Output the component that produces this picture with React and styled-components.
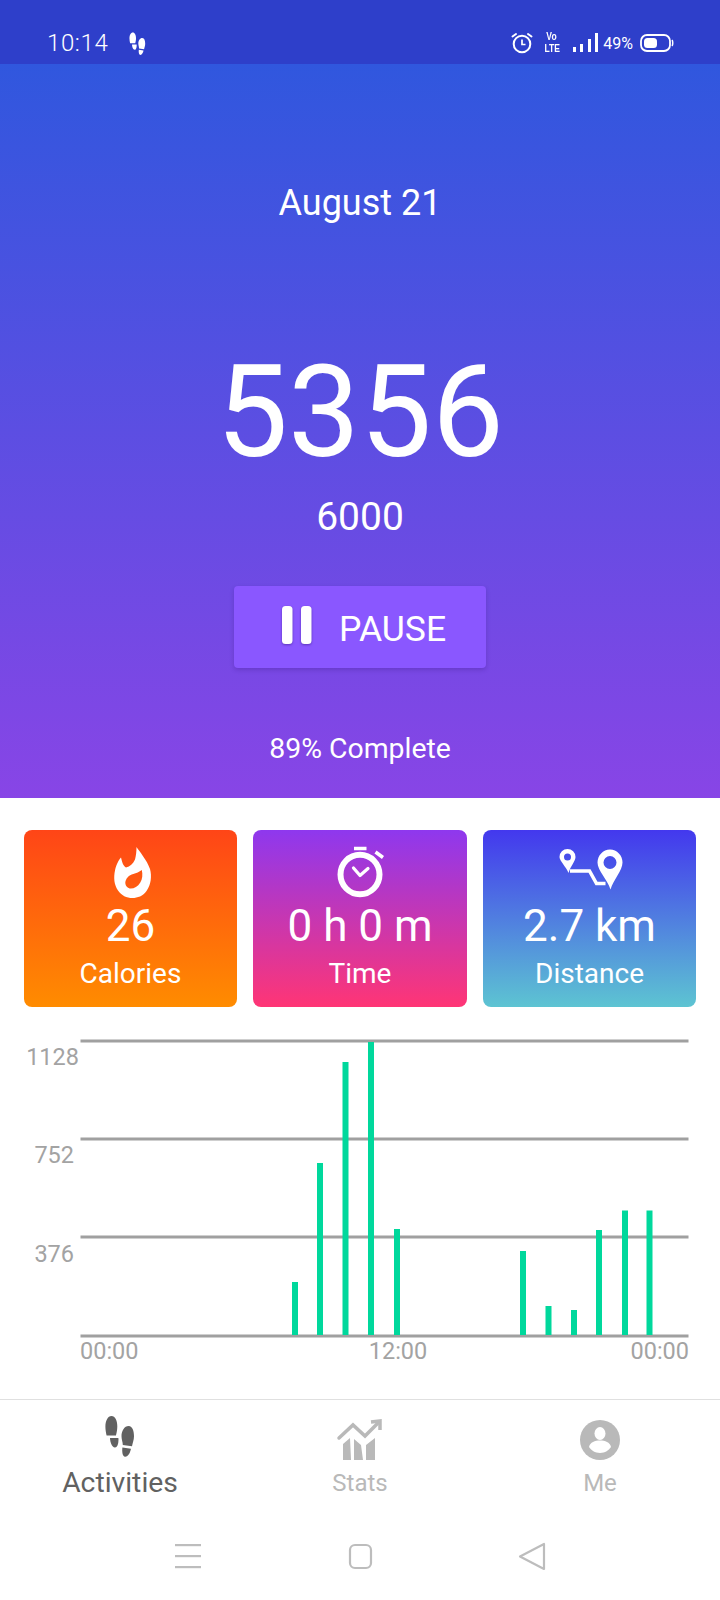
import React from "react";
import styled, { createGlobalStyle } from "styled-components";

const Global = createGlobalStyle`
  html, body { margin: 0; padding: 0; background: #fff; }
  body { font-family: Roboto, "Liberation Sans", sans-serif; overflow: hidden; }
`;

const Page = styled.div`
  width: 720px;
  height: 1600px;
  display: flex;
  flex-direction: column;
  background: #fff;
  overflow: hidden;
`;

const StatusBar = styled.div`
  height: 64px;
  flex: none;
  background: #2e3fca;
  color: #fff;
  display: flex;
  align-items: center;
  padding: 22px 46px 0 47px;
  box-sizing: border-box;
`;
const Clock = styled.span`
  font-size: 24px;
  font-weight: 300;
  letter-spacing: 0.6px;
  margin-right: 13px;
`;
const StatusRight = styled.div`
  margin-left: auto;
  display: flex;
  align-items: center;
  gap: 4px;
`;
const AlarmIcon = styled.svg`
  margin-right: -2px;
`;
const Volte = styled.span`
  font-family: "Liberation Sans", sans-serif;
  font-weight: 700;
  font-size: 10.4px;
  line-height: 12px;
  width: 17px;
  text-align: center;
  white-space: nowrap;
  transform: scaleX(0.82);
  margin: 0 9px 0 7px;
`;
const Percent = styled.span`
  font-size: 16px;
  margin: 0 3px 0 0;
`;

const Hero = styled.section`
  height: 734px;
  flex: none;
  box-sizing: border-box;
  padding-top: 117px;
  background: linear-gradient(180deg, #3057de 0%, #8845e6 100%);
  color: #fff;
  display: flex;
  flex-direction: column;
  align-items: center;
`;
const DateText = styled.div`
  font-size: 36px;
  line-height: 44px;
`;
const Count = styled.div`
  font-size: 128px;
  line-height: 130px;
  margin-top: 122px;
`;
const Goal = styled.div`
  font-size: 39px;
  line-height: 44px;
  margin-top: 18px;
`;
const PauseButton = styled.button`
  width: 252px;
  height: 82px;
  margin-top: 47px;
  border: 0;
  border-radius: 4px;
  background: #8a57ff;
  color: #fff;
  font-family: inherit;
  font-size: 35.5px;
  box-shadow: 0 2px 4px rgba(50, 20, 120, 0.25);
  display: flex;
  align-items: center;
  justify-content: center;
  gap: 25px;
  padding: 0 0 0 6px;
`;
const PauseIcon = styled.svg`
  filter: drop-shadow(0 1.5px 1px rgba(60, 30, 140, 0.6));
`;
const PauseText = styled.span`
  padding-top: 3px;
`;
const Complete = styled.div`
  font-size: 28.4px;
  line-height: 34px;
  margin-top: 64px;
`;

const Cards = styled.div`
  display: grid;
  grid-template-columns: 213px 214px 213px;
  gap: 16px;
  padding: 32px 24px 0;
`;
const Card = styled.div`
  height: 177px;
  box-sizing: border-box;
  padding-top: 6px;
  border-radius: 8px;
  background: linear-gradient(180deg, ${(p) => p.$from}, ${(p) => p.$to});
  color: #fff;
  display: flex;
  flex-direction: column;
  align-items: center;
`;
const CardValue = styled.div`
  font-size: 44px;
  line-height: 40px;
`;
const CardLabel = styled.div`
  font-size: 28px;
  line-height: 32px;
  margin-top: 12px;
`;

const ChartSvg = styled.svg`
  display: block;
  flex: none;
  margin-top: 13px;
`;
const AxisText = styled.text`
  font-family: Roboto, sans-serif;
  font-size: 23.5px;
  fill: #a3a3a3;
`;

const BottomNav = styled.nav`
  flex: none;
  margin-top: 17px;
  border-top: 1px solid #e0e0e0;
  display: grid;
  grid-template-columns: 240px 240px 240px;
  height: 118px;
  box-sizing: border-box;
`;
const NavItem = styled.div`
  display: flex;
  flex-direction: column;
  align-items: center;
  color: ${(p) => (p.$active ? "#616161" : "#b9b9b9")};
`;
const NavIcon = styled.svg`
  flex: none;
  margin: ${(p) => p.$top}px 0 ${(p) => -p.$top}px;
`;
const NavLabel = styled.div`
  font-size: ${(p) => (p.$active ? 28.3 : 24)}px;
  line-height: 32px;
  margin-top: 7px;
`;
const SystemNav = styled.div`
  flex: none;
  display: grid;
  grid-template-columns: repeat(3, 172px);
  justify-items: center;
  align-items: center;
  padding: 24px 102px 0;
`;

const feetPaths = (
  <>
    <path d="M21.5 10c3.6 0 5.8 4.6 5.8 10.4 0 3.6-.8 6.5-1.4 9.2l-9.3-.1c-.6-2.8-1.2-5.6-1.2-8.8C15.4 14.8 17.8 10 21.5 10z" />
    <path d="M20 32l8.4-.1c.4 3.2-.4 9.600-3.5 9.600-3 0-4.800-5.300-4.900-9.500z" />
    <path d="M38.7 20c3.8 0 5.3 5.3 5.3 10.3 0 3.7-1.5 7-2 10l-9.2-1.3c0-3-1.3-5.6-1.3-8.8 0-5.200 2.800-10.200 7.200-10.200z" />
    <path d="M32.4 41.5l8.5 1.3c-.4 3.200-2.600 8-5.800 8-2.800 0-3.200-5.600-2.700-9.300z" />
  </>
);

const bars = [
  [295, 1282], [320, 1163], [345.5, 1062], [371, 1042], [397, 1229],
  [523, 1251], [548.5, 1306], [574, 1310], [599, 1230], [625, 1210.5], [649.5, 1210.5],
];
const TOP = 1020;

export default function App() {
  return (
    <Page>
      <Global />
      <StatusBar>
        <Clock>10:14</Clock>
        <svg width="33" height="33" viewBox="0 0 60 60" fill="#fff">{feetPaths}</svg>
        <StatusRight>
          <AlarmIcon width="24" height="24" viewBox="0 0 24 24" fill="none" stroke="#fff" strokeWidth="2">
            <circle cx="12" cy="13" r="8.3" />
            <path d="M12 8.5V13.5H15.5" strokeWidth="1.7" />
            <path d="M2.5 5.5L6 3M21.5 5.5L18 3" strokeLinecap="round" />
          </AlarmIcon>
          <Volte>Vo<br />LTE</Volte>
          <svg width="26" height="22" viewBox="0 0 26 22" fill="#fff">
            <rect x="0" y="15" width="3" height="5" />
            <rect x="7" y="12" width="3" height="8" />
            <rect x="15" y="7" width="3" height="13" />
            <rect x="22" y="1" width="3" height="19" />
          </svg>
          <Percent>49%</Percent>
          <svg width="34" height="20" viewBox="0 0 34 20">
            <rect x="1" y="2" width="29" height="16" rx="6" fill="none" stroke="#fff" strokeWidth="1.8" />
            <rect x="4" y="5" width="13" height="10" rx="3.5" fill="#fff" />
            <path d="M32 7c1 1 1 5 0 6" fill="none" stroke="#fff" strokeWidth="1.5" />
          </svg>
        </StatusRight>
      </StatusBar>

      <Hero>
        <DateText>August 21</DateText>
        <Count>5356</Count>
        <Goal>6000</Goal>
        <PauseButton>
          <PauseIcon width="34" height="44" viewBox="0 0 34 44">
            <rect x="2" y="1" width="10.5" height="38" rx="3.5" fill="#fff" />
            <rect x="21" y="1" width="10.5" height="38" rx="3.5" fill="#fff" />
          </PauseIcon>
          <PauseText>PAUSE</PauseText>
        </PauseButton>
        <Complete>89% Complete</Complete>
      </Hero>

      <Cards>
        <Card $from="#ff4517" $to="#ff8c00">
          <svg width="70" height="70" viewBox="0 0 70 70">
            <path
              fillRule="evenodd"
              fill="#fff"
              d="M40.5 11C43 15 51 24 54 33c2 7 1 16-3.5 22-3.5 5-9 7-14 7-6 0-11-2.5-14.5-7.5-4-6-4.5-13-3-20 .7-4 3-10 6-13 1 4 2 8.5 5 10 4-1 7-3.5 9-8 1-4 1.5-8 1.5-12.5z M29.3 46.500c.5-4 3.500-7.500 8-8.500 3-.7 6-2 8.500-4 1 4.500.7 9-1.500 12.500-2.500 4-6 6-9.500 6-3 0-5.500-2.500-5.500-6z"
            />
          </svg>
          <CardValue>26</CardValue>
          <CardLabel>Calories</CardLabel>
        </Card>
        <Card $from="#8e38ee" $to="#ff3575">
          <svg width="70" height="70" viewBox="0 0 70 70" fill="none" stroke="#fff">
            <ellipse cx="35" cy="38.5" rx="19.5" ry="19.8" strokeWidth="6" />
            <path d="M29 12.5H41.5" strokeWidth="3.5" />
            <path d="M50.5 16L58 21.5" strokeWidth="3.5" />
            <path d="M28.5 32L35 39.5L43 32.5" strokeWidth="3.2" strokeLinecap="round" strokeLinejoin="round" />
          </svg>
          <CardValue>0 h 0 m</CardValue>
          <CardLabel>Time</CardLabel>
        </Card>
        <Card $from="#4338ee" $to="#5dc4d2">
          <svg width="70" height="70" viewBox="0 0 70 65">
            <g transform="translate(0 1)">
              <path
                fillRule="evenodd"
                fill="#fff"
                d="M12.5 9.500a8 8 0 0 1 8 8c0 4-5 9-7 16-2.500-6.500-9-12-9-16a8 8 0 0 1 8-8z M12.500 14a3.500 3.500 0 1 0 0 7 3.500 3.500 0 0 0 0-7z"
              />
              <path
                fillRule="evenodd"
                fill="#fff"
                d="M55 10c7 0 12.5 6 12.5 13 0 8-9 17-12 27-3-10-13-19-13-27 0-7 5.500-13 12.500-13z M55 16.500a6.500 6.500 0 1 0 0 13 6.500 6.500 0 0 0 0-13z"
              />
              <path d="M15 31.5H34.5L41.5 44H50.5" fill="none" stroke="#fff" strokeWidth="3.5" />
            </g>
          </svg>
          <CardValue>2.7 km</CardValue>
          <CardLabel>Distance</CardLabel>
        </Card>
      </Cards>

      <ChartSvg width="720" height="362" viewBox={`0 ${TOP} 720 362`}>
        {[1041, 1139, 1237, 1336].map((y) => (
          <rect key={y} x="80.5" y={y - 1.5} width="608" height="3" fill="#a0a0a0" />
        ))}
        {bars.map(([x, y]) => (
          <rect key={x} x={x - 3} y={y} width="6" height={1335 - y} fill="#00d89c" />
        ))}
        <AxisText x="79" y="1065" textAnchor="end">1128</AxisText>
        <AxisText x="74" y="1163" textAnchor="end">752</AxisText>
        <AxisText x="74" y="1262" textAnchor="end">376</AxisText>
        <AxisText x="80" y="1359">00:00</AxisText>
        <AxisText x="398" y="1359" textAnchor="middle">12:00</AxisText>
        <AxisText x="689" y="1359" textAnchor="end">00:00</AxisText>
      </ChartSvg>

      <BottomNav>
        <NavItem $active>
          <NavIcon $top={6} width="60" height="60" viewBox="0 0 60 60" fill="#616161">{feetPaths}</NavIcon>
          <NavLabel $active>Activities</NavLabel>
        </NavItem>
        <NavItem>
          <NavIcon $top={11} width="60" height="60" viewBox="0 0 60 60">
            <path d="M9 27L23 14L35 25L48 12" fill="none" stroke="#b9b9b9" strokeWidth="3.5" strokeLinecap="round" />
            <path d="M41 11L50 10V19" fill="none" stroke="#b9b9b9" strokeWidth="3.5" />
            <path fill="#b9b9b9" d="M13 33L20 27L21 49H13z M24 28L31 34L33 49H24z M36 34L45 27V49H36z" />
          </NavIcon>
          <NavLabel>Stats</NavLabel>
        </NavItem>
        <NavItem>
          <NavIcon $top={6} width="60" height="60" viewBox="0 0 60 60">
            <circle cx="30" cy="34" r="20" fill="#b9b9b9" />
            <ellipse cx="30" cy="27.5" rx="5.5" ry="6.5" fill="#fff" />
            <path d="M19 41c1-5 6-6.5 11-6.5s10 1.5 11 6.500c-2 3-6 6-11 6s-9-3-11-6z" fill="#fff" />
          </NavIcon>
          <NavLabel>Me</NavLabel>
        </NavItem>
      </BottomNav>

      <SystemNav>
        <svg width="30" height="28" viewBox="0 0 30 28" fill="#bdbdbd">
          <rect x="2" y="2" width="26" height="2.2" />
          <rect x="2" y="13" width="26" height="2.2" />
          <rect x="2" y="24" width="26" height="2.2" />
        </svg>
        <svg width="30" height="30" viewBox="0 0 30 30" fill="none" stroke="#bdbdbd" strokeWidth="2.2">
          <rect x="5" y="4" width="21" height="23" rx="5" />
        </svg>
        <svg width="30" height="30" viewBox="0 0 30 30" fill="none" stroke="#bdbdbd" strokeWidth="2.2" strokeLinejoin="round">
          <path d="M27 3V28L3 15.5z" />
        </svg>
      </SystemNav>
    </Page>
  );
}
